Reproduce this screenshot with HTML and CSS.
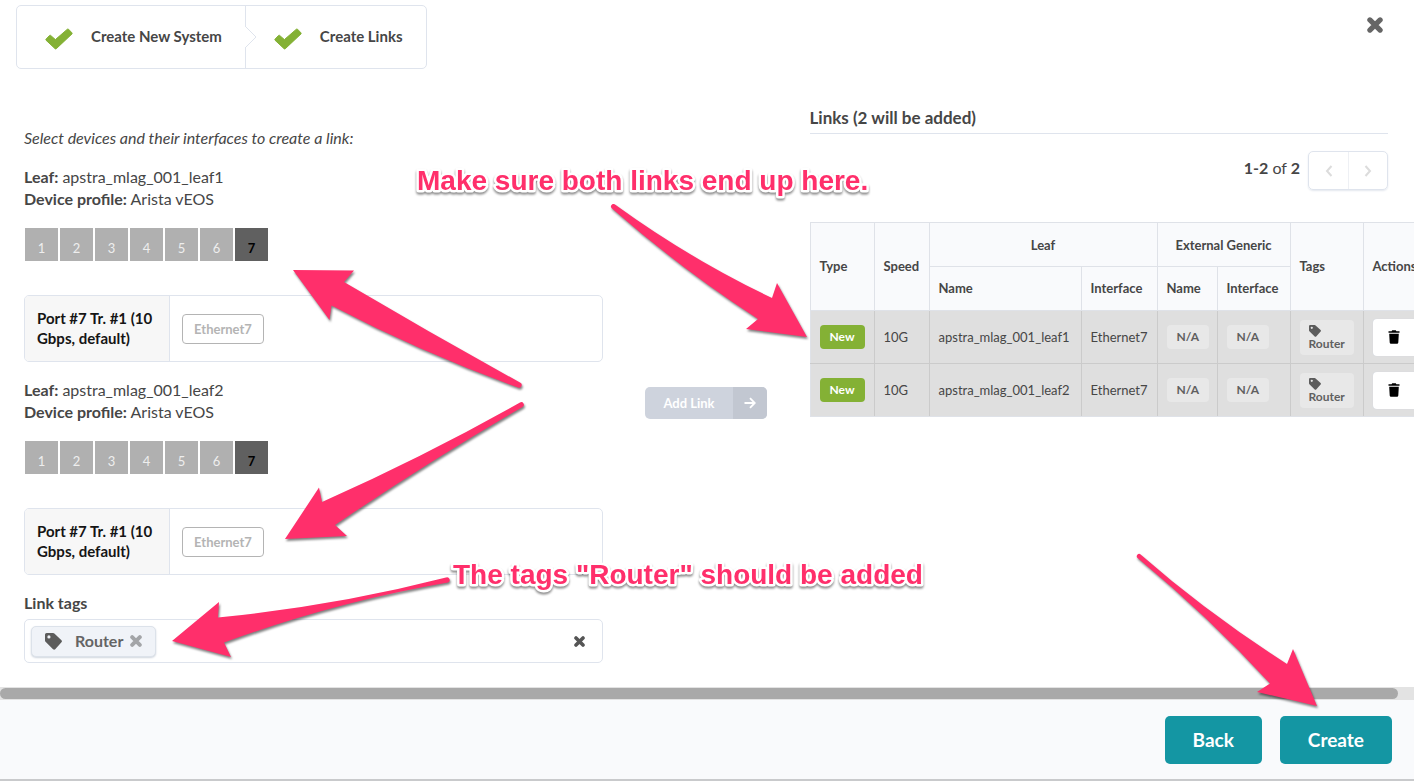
FILE: index.html
```
<!DOCTYPE html>
<html lang="en">
<head>
<meta charset="utf-8">
<meta name="viewport" content="width=device-width, initial-scale=1">
<title>Create Links</title>
<link rel="stylesheet" href="styles.css">
</head>
<body>
<svg class="defs" aria-hidden="true">
  <symbol id="i-check" viewBox="0 0 28 22"><path fill="currentColor" stroke="currentColor" stroke-linejoin="round" d="M1 11.200L4.600 7.400Q5.100 7 5.600 7.400L10.400 11.600 22.400 1.200Q23 .8 23.500 1.200L27 4.900Q27.400 5.400 27 5.900L11.300 20.700Q10.700 21.200 10.100 20.700L1 12.200Q.6 11.700 1 11.200z"/></symbol>
  <symbol id="i-times" viewBox="0 0 16 16"><path d="M2.900 2.900l10.200 10.200M13.100 2.900L2.900 13.100" fill="none" stroke="currentColor" stroke-width="5.200" stroke-linecap="round"/></symbol>
  <symbol id="i-tag" viewBox="0 0 16 16"><path fill-rule="evenodd" fill="currentColor" d="M0 7.100V1.500A1.500 1.500 0 0 1 1.500 0H7.600q.7 0 1.200.5l6.700 6.300q.9 1 0 2L9.600 15.300q-1 .9-2 0L.5 8.300Q0 7.800 0 7.100zM3.700 2.200a1.500 1.500 0 1 0 0 3 1.500 1.500 0 0 0 0-3z"/></symbol>
  <symbol id="i-trash" viewBox="0 0 12 14"><path fill="currentColor" d="M.5 1.200H3.600L4.200.3H7.800L8.400 1.200H11.500V2.800H.5zM1.200 3.700H10.800L10.300 12.500Q10.200 13.700 9 13.700H3Q1.800 13.700 1.700 12.500z"/></symbol>
  <symbol id="i-left" viewBox="0 0 8 12"><path d="M6.500 1L2 6l4.500 5" fill="none" stroke="currentColor" stroke-width="2"/></symbol>
  <symbol id="i-right" viewBox="0 0 8 12"><path d="M1.500 1L6 6l-4.500 5" fill="none" stroke="currentColor" stroke-width="2"/></symbol>
  <symbol id="i-arrow" viewBox="0 0 12 12"><path d="M.5 6h10M6 1.200L10.800 6 6 10.800" fill="none" stroke="currentColor" stroke-width="1.800"/></symbol>
</svg>

<div class="dialog">
  <header class="top">
    <ol class="steps">
      <li class="step"><svg class="check"><use href="#i-check"/></svg>Create New System
        <svg class="notch" viewBox="0 0 12 22"><path d="M0 0L11 11 0 22" fill="#fff" stroke="#dfe4ed"/></svg></li>
      <li class="step"><svg class="check"><use href="#i-check"/></svg>Create Links</li>
    </ol>
    <button class="close" aria-label="Close"><svg><use href="#i-times"/></svg></button>
  </header>

  <main class="body">
    <section class="devices">
      <p class="hint">Select devices and their interfaces to create a link:</p>

      <div class="device">
        <p><b>Leaf:</b> apstra_mlag_001_leaf1<br><b>Device profile:</b> Arista vEOS</p>
        <div class="ports">
          <button class="port">1</button><button class="port">2</button><button class="port">3</button><button class="port">4</button><button class="port">5</button><button class="port">6</button><button class="port active">7</button>
        </div>
        <div class="transform">
          <div class="transform-name">Port #7 Tr. #1 (10 Gbps, default)</div>
          <div class="transform-body"><button class="iface">Ethernet7</button></div>
        </div>
      </div>

      <div class="device">
        <p><b>Leaf:</b> apstra_mlag_001_leaf2<br><b>Device profile:</b> Arista vEOS</p>
        <div class="ports">
          <button class="port">1</button><button class="port">2</button><button class="port">3</button><button class="port">4</button><button class="port">5</button><button class="port">6</button><button class="port active">7</button>
        </div>
        <div class="transform">
          <div class="transform-name">Port #7 Tr. #1 (10 Gbps, default)</div>
          <div class="transform-body"><button class="iface">Ethernet7</button></div>
        </div>
      </div>

      <label class="tags-label" for="link-tags">Link tags</label>
      <div class="tags-field">
        <span class="chip"><svg class="chip-tag"><use href="#i-tag"/></svg>Router<button class="chip-x" aria-label="Remove Router"><svg><use href="#i-times"/></svg></button></span>
        <input id="link-tags" type="text">
        <button class="clear" aria-label="Clear tags"><svg><use href="#i-times"/></svg></button>
      </div>
    </section>

    <div class="middle">
      <button class="add" disabled><span class="add-text">Add Link</span><span class="add-icon"><svg><use href="#i-arrow"/></svg></span></button>
    </div>

    <section class="links">
      <h2>Links (2 will be added)</h2>
      <div class="pager">
        <span><b>1-2</b> of <b>2</b></span>
        <div class="pager-buttons">
          <button aria-label="Previous page"><svg><use href="#i-left"/></svg></button>
          <button aria-label="Next page"><svg><use href="#i-right"/></svg></button>
        </div>
      </div>
      <table>
        <colgroup><col class="w-type"><col class="w-speed"><col class="w-leaf"><col class="w-if"><col class="w-name"><col class="w-gif"><col class="w-tags"><col class="w-actions"></colgroup>
        <thead>
          <tr><th rowspan="2">Type</th><th rowspan="2">Speed</th><th colspan="2" class="group">Leaf</th><th colspan="2" class="group">External Generic</th><th rowspan="2">Tags</th><th rowspan="2">Actions</th></tr>
          <tr><th>Name</th><th>Interface</th><th>Name</th><th>Interface</th></tr>
        </thead>
        <tbody>
          <tr><td><span class="label new">New</span></td><td>10G</td><td>apstra_mlag_001_leaf1</td><td>Ethernet7</td><td><span class="label">N/A</span></td><td><span class="label">N/A</span></td><td><span class="label tag"><svg><use href="#i-tag"/></svg>Router</span></td><td><button class="trash" aria-label="Delete link"><svg><use href="#i-trash"/></svg></button></td></tr>
          <tr><td><span class="label new">New</span></td><td>10G</td><td>apstra_mlag_001_leaf2</td><td>Ethernet7</td><td><span class="label">N/A</span></td><td><span class="label">N/A</span></td><td><span class="label tag"><svg><use href="#i-tag"/></svg>Router</span></td><td><button class="trash" aria-label="Delete link"><svg><use href="#i-trash"/></svg></button></td></tr>
        </tbody>
      </table>
    </section>
  </main>

  <div class="scrollbar"><div class="thumb"></div></div>

  <footer class="actions">
    <button class="primary">Back</button>
    <button class="primary">Create</button>
  </footer>
</div>

<svg class="notes" width="1414" height="781" viewBox="0 0 1414 781">
  <g class="arrows">
    <path d="M293 270L354 270.500 344 282Q432 334 520 382.500A2.500 2.500 0 0 1 518 387.500Q420 352 331.500 305.500L329.500 320z"/>
    <path d="M285 539L319 487.500 322 502Q425 456 520 402.500A2.500 2.500 0 0 1 522.500 407Q428 462 335 525L347 536z"/>
    <path d="M807 337L777 283 772 298Q690 259 615 204.500A2.500 2.500 0 0 0 612 208.500Q681 269 758 319L746 329z"/>
    <path d="M172 641L219 602 218 617.500Q335 606 446 577.500A2.500 2.500 0 0 1 448 582.500Q335 602 224 642.500L231 657z"/>
    <path d="M1317 706L1293 649 1287 664Q1206 612 1140 554A2.500 2.500 0 0 0 1137 557.500Q1209 617 1270 683.500L1257 692z"/>
  </g>
  <text class="note" x="417" y="190">Make sure both links end up here.</text>
  <text class="note" x="453" y="584">The tags "Router" should be added</text>
</svg>
</body>
</html>
```
FILE: styles.css
```
* { box-sizing: border-box; }
html, body { margin: 0; height: 100%; }
body {
  position: relative;
  font: 16px/22px Lato, "Open Sans", sans-serif;
  color: #464646;
  background: #fff;
  overflow: hidden;
}
button, input { font: inherit; color: inherit; margin: 0; padding: 0; border: 0; background: none; }
button svg { display: block; }
p, h2, ol { margin: 0; padding: 0; }
.defs { position: absolute; width: 0; height: 0; }

.dialog { display: flex; flex-direction: column; min-height: 100%; border-bottom: 2px solid #c9cacc; }

/* header */
.top { display: flex; justify-content: space-between; align-items: flex-start; padding: 5px 31px 0 16px; }
.steps { display: flex; list-style: none; border: 1px solid #dfe4ed; border-radius: 5px; }
.step { position: relative; display: flex; align-items: center; height: 62px; padding: 0 23px 3px 28px; font-size: 15px; font-weight: 700; }
.step + .step { border-left: 1px solid #dfe4ed; }
.check { width: 28px; height: 22px; margin: 6px 18px 0 0; color: #84b135; }
.notch { position: absolute; z-index: 1; left: 100%; top: 20px; width: 12px; height: 22px; }
.close { margin-top: 12px; color: #666; }
.close svg { width: 16px; height: 16px; }

/* columns */
.body { flex: 1; display: grid; grid-template-columns: 1fr 207px 1fr; padding: 34px 26px 24px 24px; overflow: hidden; }
.devices { min-width: 0; padding-top: 24px; }
.hint { font-style: italic; margin-bottom: 17px; }
.device { margin-bottom: 17px; }
.ports { display: flex; gap: 2px; margin: 18px 0 34px 1px; }
.port { width: 33px; height: 33px; padding-top: 6px; font-size: 13px; background: #b0b0b0; color: #eee; }
.port.active { background: #606060; color: #000; font-weight: 700; }
.transform { display: flex; height: 67px; border: 1px solid #dfe4ed; border-radius: 5px; overflow: hidden; }
.transform-name { width: 145px; padding: 12px 12px 0; background: #f7f7f7; border-right: 1px solid #dfe4ed; font-size: 15px; line-height: 20px; font-weight: 700; color: #151515; }
.transform-body { display: flex; align-items: center; padding: 0 12px; }
.iface { width: 82px; height: 30px; border: 1px solid #b4b4b4; border-radius: 4px; font-size: 13px; font-weight: 700; color: #b4b4b4; }

.tags-label { display: block; font-weight: 700; margin-bottom: 5px; }
.tags-field { display: flex; align-items: center; height: 44px; padding: 0 17px 0 6px; border: 1px solid #dfe4ed; border-radius: 5px; }
.tags-field input { flex: 1; min-width: 0; outline: 0; }
.chip { display: flex; align-items: center; height: 31px; padding: 0 13px; border-radius: 5px; background: #f0f3f8; border: 1px solid #dce2ea; box-shadow: 0 1px 2px #cfd5de; font-weight: 700; font-size: 16px; color: #646464; }
.chip-tag { width: 17px; height: 17px; margin-right: 13px; color: #5c5c5c; }
.chip-x { margin-left: 7px; color: #a3a5a8; }
.chip-x svg { width: 12px; height: 12px; }
.clear { color: #555; }
.clear svg { width: 11px; height: 11px; }

.middle { display: flex; justify-content: center; align-items: flex-start; padding: 284px 0 0 0; }
.add { display: flex; height: 32px; border-radius: 5px; overflow: hidden; background: #ced3dd; color: #fff; font-size: 13px; font-weight: 700; }
.add-text { display: flex; align-items: center; justify-content: center; width: 88px; }
.add-icon { display: flex; align-items: center; justify-content: center; width: 34px; height: 32px; background: #c2c7d1; }
.add-icon svg { width: 12px; height: 12px; }

/* links */
.links { min-width: 0; padding-top: 4px; }
.links h2 { font-size: 17px; line-height: 22px; padding-bottom: 4px; border-bottom: 1px solid #dfe4ed; }
.pager { display: flex; align-items: center; justify-content: flex-end; gap: 8px; height: 39px; margin: 17px 0 32px; }
.pager span { padding-bottom: 5px; }
.pager-buttons { display: flex; height: 39px; border: 1px solid #dfe4ed; border-radius: 5px; box-shadow: 0 1px 2px #e3e7ee; }
.pager-buttons button { display: flex; align-items: center; justify-content: center; width: 39px; color: #dcdcdc; }
.pager-buttons button + button { border-left: 1px solid #eef0f4; }
.pager-buttons svg { width: 8px; height: 12px; }

table { table-layout: fixed; width: 650px; border-collapse: collapse; font-size: 13px; line-height: 18px; }
.w-type { width: 64px; } .w-speed { width: 55px; } .w-leaf { width: 152px; } .w-if { width: 76px; }
.w-name { width: 60px; } .w-gif { width: 73px; } .w-tags { width: 73px; } .w-actions { width: 97px; }
th, td { padding: 0 0 0 9px; text-align: left; white-space: nowrap; }
th { height: 44px; padding-bottom: 2px; background: #f9fafc; border: 1px solid #dfe2e8; font-weight: 700; }
th.group { text-align: center; padding: 0; }
td { height: 53px; background: #dfdfdf; border: 1px solid #cbcbcb; }
td:first-child { border-left-color: #dfe2e8; }
tbody tr:first-child td { border-top-color: #dfdfdf; }
tbody tr:last-child td { border-bottom-color: #dfe2e8; }
.label { display: inline-block; padding: 3px 10px; border-radius: 4px; background: #e8e8e8; font-size: 12px; font-weight: 700; color: #606060; }
.label.new { background: #84b135; color: #fff; }
.label.tag { padding: 5px 9px; line-height: 13px; vertical-align: middle; }
.label.tag svg { display: block; width: 12px; height: 12px; color: #5c5c5c; }
.trash { display: block; width: 48px; height: 37px; padding-left: 15px; border-radius: 4px; background: #fff; color: #000; box-shadow: 0 0 1px #c5cedd; }
.trash svg { width: 12px; height: 14px; }

/* bottom */
.scrollbar { height: 13px; padding: 1px 16px 1px 0; background: #e3e3e3; }
.thumb { height: 11px; border-radius: 6px; background: #a9a9a9; }
.actions { display: flex; justify-content: flex-end; gap: 18px; height: 79px; padding: 16px 22px 15px; background: #f9fafc; }
.primary { padding: 0 28px; border-radius: 5px; background: #1496a3; color: #fff; font-size: 19px; font-weight: 700; }

/* annotations */
.notes { position: absolute; left: 0; top: 0; pointer-events: none; }
.arrows { fill: #ff2f6b; filter: drop-shadow(1px 2px 1px rgba(0, 0, 0, .5)); }
.note { font: 700 28px "Liberation Sans", Arial, sans-serif; fill: #ff2f6b; stroke: #fff; stroke-width: 5px; stroke-linejoin: round; paint-order: stroke; filter: drop-shadow(0 2px 1px rgba(0, 0, 0, .45)); }
```
